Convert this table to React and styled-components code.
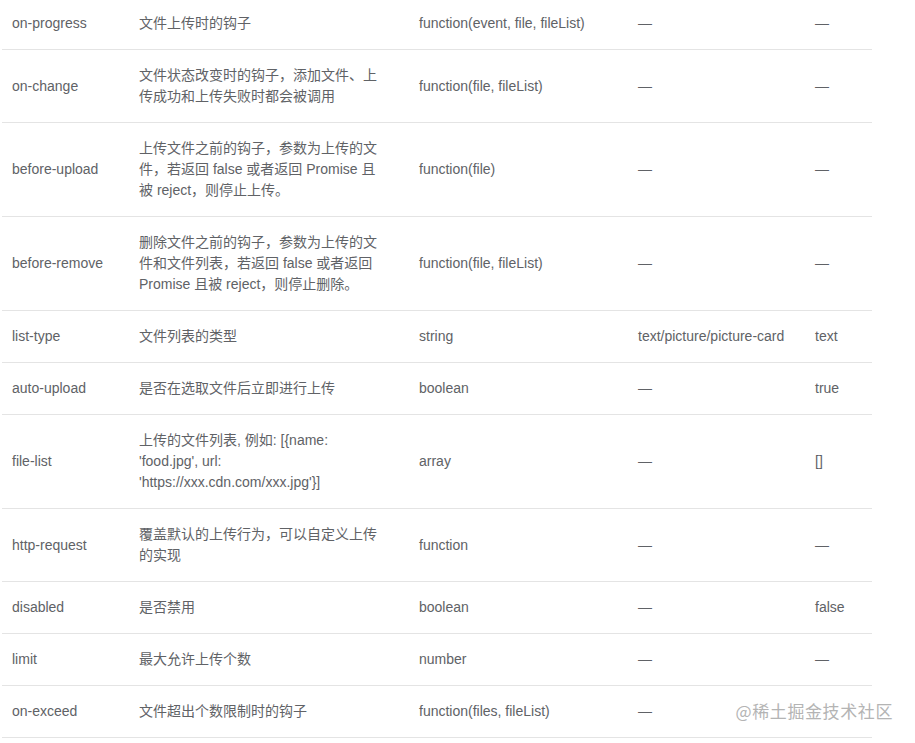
import React from 'react';
import styled, { createGlobalStyle } from 'styled-components';

const GlobalStyle = createGlobalStyle`
  body {
    margin: 0;
    background: #ffffff;
    font-family: "Liberation Sans", "Noto Sans CJK SC", sans-serif;
    overflow: hidden;
  }
`;

const Page = styled.div`
  position: relative;
  width: 915px;
  height: 743px;
  overflow: hidden;
`;

const Table = styled.div`
  margin: -2px 0 0 2px;
  width: 870px;
  display: grid;
  grid-template-columns: 127px 280px 219px 177px 67px;
  font-size: 14px;
  line-height: 21px;
  color: #606266;
`;

const Row = styled.div`
  display: contents;
`;

const Cell = styled.div`
  display: flex;
  align-items: center;
  padding: 15px ${p => (p.$wide ? '25px' : '10px')} 15px 10px;
  border-bottom: 1px solid #e4e4e4;
  word-break: normal;
  overflow-wrap: break-word;
`;

const Watermark = styled.div`
  position: absolute;
  right: 22px;
  top: 700px;
  padding-left: 4px;
  font-size: 17px;
  line-height: 22px;
  color: #b4b4b4;
  background: #ffffff;
  font-family: "Noto Sans CJK SC", sans-serif;
  letter-spacing: 0.6px;
`;

const rows = [
  ['on-progress', '文件上传时的钩子', 'function(event, file, fileList)', '—', '—'],
  ['on-change', '文件状态改变时的钩子，添加文件、上传成功和上传失败时都会被调用', 'function(file, fileList)', '—', '—'],
  ['before-upload', '上传文件之前的钩子，参数为上传的文件，若返回 false 或者返回 Promise 且被 reject，则停止上传。', 'function(file)', '—', '—'],
  ['before-remove', '删除文件之前的钩子，参数为上传的文件和文件列表，若返回 false 或者返回 Promise 且被 reject，则停止删除。', 'function(file, fileList)', '—', '—'],
  ['list-type', '文件列表的类型', 'string', 'text/picture/picture-card', 'text'],
  ['auto-upload', '是否在选取文件后立即进行上传', 'boolean', '—', 'true'],
  ['file-list', "上传的文件列表, 例如: [{name: 'food.jpg', url: 'https://xxx.cdn.com/xxx.jpg'}]", 'array', '—', '[]'],
  ['http-request', '覆盖默认的上传行为，可以自定义上传的实现', 'function', '—', '—'],
  ['disabled', '是否禁用', 'boolean', '—', 'false'],
  ['limit', '最大允许上传个数', 'number', '—', '—'],
  ['on-exceed', '文件超出个数限制时的钩子', 'function(files, fileList)', '—', ''],
  ['', '', '', '', ''],
];

export default function App() {
  return (
    <Page>
      <GlobalStyle />
      <Table>
        {rows.map((r, i) => (
          <Row key={i}>
            {r.map((c, j) => (
              <Cell key={j} $wide={j === 1}>{c}</Cell>
            ))}
          </Row>
        ))}
      </Table>
      <Watermark>@稀土掘金技术社区</Watermark>
    </Page>
  );
}
